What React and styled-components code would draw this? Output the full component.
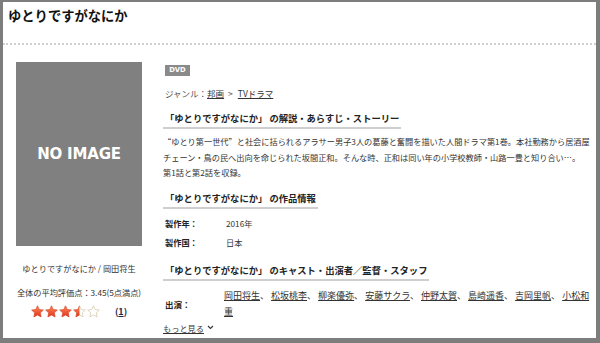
import styled, { createGlobalStyle } from "styled-components";

const GlobalStyle = createGlobalStyle`
  html, body {
    margin: 0;
    padding: 0;
    background: #7d7d7d;
    height: 343px;
    overflow: hidden;
  }
  * {
    box-sizing: border-box;
  }
`;

const JP = `"Noto Sans CJK JP", "Noto Sans", sans-serif`;

const Panel = styled.div`
  margin: 2px 4px 0 3px;
  height: 336px;
  background: #fff;
  font-family: ${JP};
  color: #333;
  overflow: hidden;
`;

const Header = styled.header`
  height: 43px;
  padding: 4px 5px 0;
  border-bottom: 2px dotted #d0d0d0;
`;

const Title = styled.h1`
  margin: 0;
  font-size: 13.3px;
  line-height: 20px;
  font-weight: bold;
  color: #111;
`;

const Body = styled.div`
  display: flex;
  gap: 21px;
`;

const Side = styled.aside`
  width: 139px;
  padding: 17px 0 0 13px;
  display: flex;
  flex-direction: column;
  align-items: center;
  flex-shrink: 0;
`;

const NoImage = styled.div`
  width: 126px;
  height: 184px;
  background: #808080;
  color: #fff;
  display: flex;
  align-items: center;
  justify-content: center;
  font-family: "DejaVu Sans", sans-serif;
  font-weight: bold;
  font-size: 15px;
  letter-spacing: -0.2px;
`;

const SideText = styled.p`
  margin: ${(p) => p.$top}px 0 0;
  font-size: 8.2px;
  line-height: 14px;
  color: #333;
  white-space: nowrap;
`;

const Rating = styled.div`
  margin-top: 5px;
  display: flex;
  align-items: center;
  height: 14px;
`;

const Stars = styled.div`
  display: flex;
  gap: 1px;
`;

const Count = styled.span`
  margin-left: 15px;
  font-size: 9px;
  font-weight: bold;
  color: #1c2a4a;
  u {
    text-decoration: underline;
  }
`;

const Main = styled.main`
  width: 431px;
  padding-top: 20px;
  display: flex;
  flex-direction: column;
  align-items: flex-start;
`;

const Badge = styled.span`
  display: block;
  width: 25px;
  height: 11px;
  line-height: 11px;
  background: #8a8a8a;
  color: #fff;
  font-family: "DejaVu Sans", sans-serif;
  font-weight: bold;
  font-size: 6.8px;
  text-align: center;
  margin-left: 2px;
`;

const Genre = styled.div`
  margin-top: 10px;
  font-size: 8.5px;
  line-height: 14px;
  color: #555;
  padding-left: 2px;
`;

const Arrow = styled.span`
  margin: 0 5px 0 4px;
`;

const Link = styled.a`
  color: #333;
  text-decoration: underline;
`;

const Heading = styled.h2`
  margin: ${(p) => p.$top}px 0 0;
  padding: 0 2px 2px 2px;
  font-size: 9.3px;
  line-height: 14px;
  font-weight: bold;
  color: #222;
  border-bottom: 2px solid #cfcfcf;
`;

const Story = styled.p`
  margin: 5px 0 0;
  width: 100%;
  font-size: 8.2px;
  line-height: 15.5px;
  color: #333;
`;

const Wide = styled.span`
  font-feature-settings: "fwid" 1;
`;

const Nobr = styled.span`
  white-space: nowrap;
`;

const InfoTable = styled.dl`
  margin: 5px 0 0;
  display: grid;
  grid-template-columns: 61px 1fr;
  grid-auto-rows: 19px;
  align-items: center;
  font-size: 8.2px;
  padding-left: 2px;
  dt {
    font-weight: bold;
    color: #222;
  }
  dd {
    margin: 0;
    color: #333;
  }
`;

const Cast = styled.div`
  margin-top: 7px;
  width: 100%;
  display: grid;
  grid-template-columns: 59px 1fr;
  align-items: center;
  padding-left: 2px;
`;

const CastLabel = styled.span`
  font-size: 8.5px;
  font-weight: bold;
  color: #222;
`;

const CastList = styled.div`
  font-size: 9px;
  line-height: 16px;
  color: #333;
`;

const More = styled.a`
  display: inline-flex;
  align-items: center;
  gap: 3px;
  margin-top: 1px;
  font-size: 8.2px;
  line-height: 14px;
  color: #333;
  span {
    text-decoration: underline;
  }
`;

const STAR = "M12 1.5l3.2 6.9 7.5.9-5.5 5.2 1.4 7.5L12 18.3 5.4 22l1.4-7.5L1.3 9.3l7.5-.9z";

function Star({ kind, id }) {
  return (
    <svg width="13" height="13" viewBox="0 0 24 24">
      <defs>
        <linearGradient id={`g${id}`} x1="0" y1="0" x2="0" y2="1">
          <stop offset="0" stopColor="#ff8a5c" />
          <stop offset="1" stopColor="#e4321a" />
        </linearGradient>
        <clipPath id={`c${id}`}>
          <rect x="0" y="0" width="12" height="24" />
        </clipPath>
      </defs>
      <path d={STAR} fill="#fff" stroke="#dacdb2" strokeWidth="1.6" strokeLinejoin="round" />
      {kind !== "empty" && (
        <path
          d={STAR}
          fill={`url(#g${id})`}
          stroke="#d8442a"
          strokeWidth="1"
          strokeLinejoin="round"
          clipPath={kind === "half" ? `url(#c${id})` : undefined}
        />
      )}
    </svg>
  );
}

const cast = ["岡田将生", "松坂桃李", "柳楽優弥", "安藤サクラ", "仲野太賀", "島崎遥香", "吉岡里帆", "小松和重"];
const rating = ["full", "full", "full", "half", "empty"];

export default function App() {
  return (
    <>
      <GlobalStyle />
      <Panel>
        <Header>
          <Title>ゆとりですがなにか</Title>
        </Header>
        <Body>
          <Side>
            <NoImage>NO IMAGE</NoImage>
            <SideText $top={15}>ゆとりですがなにか / 岡田将生</SideText>
            <SideText $top={10}>全体の平均評価点：3.45(5点満点)</SideText>
            <Rating>
              <Stars>
                {rating.map((k, i) => (
                  <Star key={i} kind={k} id={i} />
                ))}
              </Stars>
              <Count>
                (<u>1</u>)
              </Count>
            </Rating>
          </Side>
          <Main>
            <Badge>DVD</Badge>
            <Genre>
              ジャンル：<Link href="#">邦画</Link>
              <Arrow>&gt;</Arrow>
              <Link href="#">TVドラマ</Link>
            </Genre>
            <Heading $top={11}>「ゆとりですがなにか」 の解説・あらすじ・ストーリー</Heading>
            <Story>
              <Wide>“</Wide>ゆとり第一世代<Wide>”</Wide>と社会に括られるアラサー男子3人の葛藤と奮闘を描いた人間ドラマ第1巻。本社勤務から居酒屋チェーン・鳥の民へ出向を命じられた坂間正和。そんな時、正和は同い年の小学校教師・山路一豊と知り合い<Wide>…</Wide>。<Nobr>第1話</Nobr>と第2話を収録。
            </Story>
            <Heading $top={10}>「ゆとりですがなにか」 の作品情報</Heading>
            <InfoTable>
              <dt>製作年：</dt>
              <dd>2016年</dd>
              <dt>製作国：</dt>
              <dd>日本</dd>
            </InfoTable>
            <Heading $top={11}>「ゆとりですがなにか」 のキャスト・出演者／監督・スタッフ</Heading>
            <Cast>
              <CastLabel>出演：</CastLabel>
              <CastList>
                {cast.map((name, i) => (
                  <span key={name}>
                    <Link href="#">{name}</Link>
                    {i < cast.length - 1 ? "、 " : ""}
                  </span>
                ))}
              </CastList>
            </Cast>
            <More href="#">
              <span>もっと見る</span>
              <svg width="7" height="5" viewBox="0 0 7 5">
                <path d="M1 1l2.5 2.5L6 1" fill="none" stroke="#333" strokeWidth="1.1" />
              </svg>
            </More>
          </Main>
        </Body>
      </Panel>
    </>
  );
}
